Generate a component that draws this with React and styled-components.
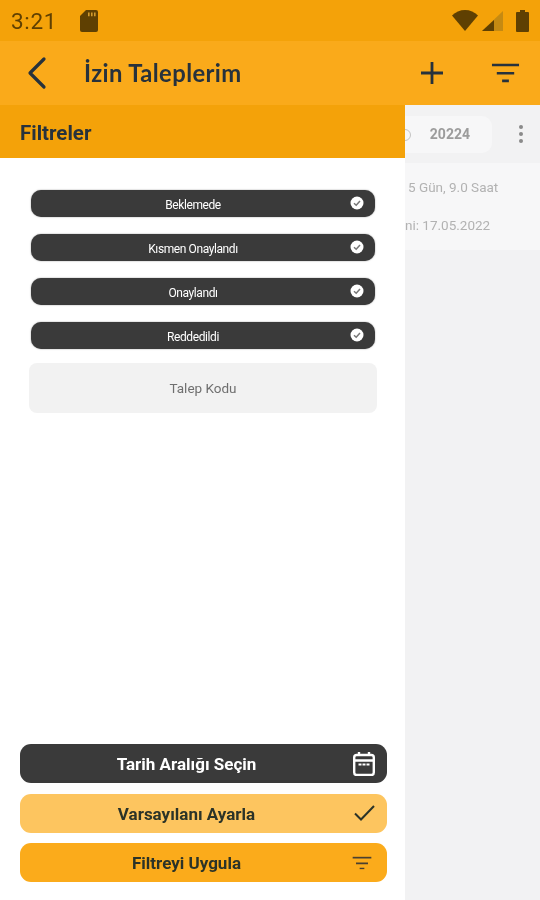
import React from "react";
import styled, { createGlobalStyle } from "styled-components";

const Global = createGlobalStyle`
  html, body { margin: 0; padding: 0; background: #f3f3f3; }
  * { box-sizing: border-box; }
  #root { width: 540px; height: 900px; overflow: hidden; }
`;

const Page = styled.div`
  width: 540px; height: 900px; display: flex; flex-direction: column;
  font-family: Roboto, "Liberation Sans", sans-serif;
  filter: blur(0.45px);
`;
const StatusBar = styled.div`
  height: 41px; flex: none; background: #f4a209; display: flex; align-items: center;
  padding: 0 11px 0 11px; color: #5f4002;
`;
const Clock = styled.span`
  font-size: 22.5px; letter-spacing: 0.7px; width: 69px;
`;
const StatusRight = styled.div`
  margin-left: auto; display: flex; align-items: center; gap: 4px;
`;
const BatterySlot = styled.span`
  display: flex; margin-left: 9px;
`;
const AppBar = styled.div`
  height: 64px; flex: none; background: #faaa1a; display: flex; align-items: center;
  padding: 0 20px 0 24px; color: #263238;
`;
const BackButton = styled.div`
  width: 26px; height: 34px; display: flex; margin-right: 34px;
`;
const Title = styled.h1`
  margin: 0; font: 700 23.8px Lato, sans-serif; color: #27323c; letter-spacing: 0.4px;
`;
const AppActions = styled.div`
  margin-left: auto; display: flex; align-items: center; gap: 47px;
`;
const Body = styled.div`
  position: relative; flex: 1; background: #f2f2f3; overflow: hidden;
  padding-left: 405px; display: flex; flex-direction: column;
`;
const ChipRow = styled.div`
  height: 58px; flex: none; display: flex; align-items: center;
`;
const Chip = styled.div`
  width: 87px; height: 37px; background: #f7f7f8; border-radius: 0 10px 10px 0;
  display: flex; align-items: center; justify-content: flex-end; padding-right: 22px;
  font: 700 14px Roboto, sans-serif; color: #9c9c9c; position: relative;
`;
const ChipGlyph = styled.span`
  position: absolute; left: -6px; top: 13px; width: 12px; height: 12px; border-radius: 50%;
  border: 1.5px solid #c4c4c4;
`;
const Dots = styled.div`
  margin-left: 27px; display: flex; flex-direction: column; gap: 2.6px;
`;
const Dot = styled.span`
  width: 4px; height: 4px; border-radius: 50%; background: #8a8a8a;
`;
const InfoCard = styled.div`
  height: 87px; background: #f7f7f8; display: flex; flex-direction: column; padding-top: 16px; gap: 21px;
`;
const InfoLine = styled.div`
  font: 400 13.5px/17px Roboto, sans-serif; color: #b2b2b2; padding-left: ${p => p.$indent}px;
  white-space: nowrap;
`;
const Drawer = styled.aside`
  position: absolute; left: 0; top: 0; bottom: 0; width: 405px; background: #fff;
  display: flex; flex-direction: column;
`;
const DrawerHeader = styled.div`
  height: 53px; flex: none; background: #f4a209; display: flex; align-items: center;
  padding: 2px 0 0 20px; font: 700 20.5px Roboto, sans-serif; color: #27323c;
`;
const FilterList = styled.div`
  display: flex; flex-direction: column; gap: 17px; padding: 32px 30px 0 31px;
`;
const Pill = styled.div`
  position: relative; height: 27px; background: #3a3a3a; border-radius: 10px;
  display: flex; align-items: center; justify-content: center;
  padding: 2px 20px 0 0;
  color: #fff; font: 400 12px Roboto, sans-serif; letter-spacing: -0.4px;
  box-shadow: 0 0 1.5px rgba(0,0,0,.5);
`;
const PillCheck = styled.span`
  position: absolute; right: 11px; top: 6px; display: flex;
`;
const CodeField = styled.div`
  margin: 14px 28px 0 29px; height: 50px; background: #f2f2f2; border-radius: 8px;
  display: flex; align-items: center; justify-content: center;
  font: 400 13.5px Roboto, sans-serif; color: #6f6f6f;
`;
const Actions = styled.div`
  margin-top: auto; display: flex; flex-direction: column; gap: 10.5px; padding: 0 18px 18px 20px;
`;
const ActionButton = styled.div`
  position: relative; height: 39px; border-radius: 11px; background: ${p => p.$bg};
  color: ${p => p.$fg}; display: flex; align-items: center; justify-content: center;
  font: 700 17px Roboto, sans-serif; padding: 1px 34px 0 0;
`;
const ActionIcon = styled.span`
  position: absolute; right: ${p => p.$right}px; top: 50%; transform: translateY(-50%); display: flex;
`;

const SdCard = () => (
  <svg width="18" height="22" viewBox="0 0 18 22"><path fill="#5f4002" d="M6 0h10a2 2 0 0 1 2 2v18a2 2 0 0 1-2 2H2a2 2 0 0 1-2-2V6z"/><path fill="#d29a2c" d="M8 2.600h1.600v3.600H8zM11 2.600h1.600v3.600H11zM14 2.600h1.600v3.600H14z"/></svg>
);
const Wifi = () => (
  <svg width="26" height="21" viewBox="0 0 26 21"><path fill="#5f4002" d="M0 5.500C3.500 2 8 0 13 0s9.500 2 13 5.500L13 21z"/></svg>
);
const Signal = () => (
  <svg width="21" height="20" viewBox="0 0 21 20"><path fill="#c58a12" d="M21 0v20H0z"/><path fill="#5f4002" d="M12 9v11H0z"/></svg>
);
const Battery = () => (
  <svg width="13" height="22" viewBox="0 0 13 22"><path fill="#5f4002" d="M4 0h5v2h3a1 1 0 0 1 1 1v18a1 1 0 0 1-1 1H1a1 1 0 0 1-1-1V3a1 1 0 0 1 1-1h3z"/></svg>
);
const Back = () => (
  <svg width="26" height="34" viewBox="0 0 26 34" fill="none"><path d="M20 3 6 17l14 14" stroke="#27323c" strokeWidth="3.200" strokeLinecap="round" strokeLinejoin="round"/></svg>
);
const Plus = () => (
  <svg width="24" height="24" viewBox="0 0 24 24" fill="none"><path d="M12 1v22M1 12h22" stroke="#27323c" strokeWidth="2.800"/></svg>
);
const FilterLines = ({ w = 29, color = "#27323c" }) => (
  <svg width={w} height={w * 0.67} viewBox="0 0 30 20" fill="none"><path d="M1 2h28M6 10.500h18M11.500 18.500h7" stroke={color} strokeWidth="2.700"/></svg>
);
const Check = () => (
  <svg width="14" height="14" viewBox="0 0 14 14"><circle cx="7" cy="7" r="6.500" fill="#fff"/><path d="M4 7.300 6.200 9.300 10 5" fill="none" stroke="#777" strokeWidth="1.500"/></svg>
);
const Calendar = () => (
  <svg width="22" height="24" viewBox="0 0 22 24" fill="none" stroke="#fff" strokeWidth="2.400"><rect x="1.200" y="3" width="19.600" height="20" rx="2.500"/><path d="M1 8.500h20M6 0v4M16 0v4"/><path d="M5.500 12.500h3M9.500 12.500h3M13.500 12.500h3" strokeWidth="1.800"/></svg>
);
const Tick = () => (
  <svg width="21" height="16" viewBox="0 0 21 16" fill="none"><path d="M1 8.500 7 14.500 20 1" stroke="#2b3328" strokeWidth="2"/></svg>
);

const filters = ["Beklemede", "Kısmen Onaylandı", "Onaylandı", "Reddedildi"];

export default function App() {
  return (
    <Page>
      <Global />
      <StatusBar>
        <Clock>3:21</Clock>
        <SdCard />
        <StatusRight><Wifi /><Signal /><BatterySlot><Battery /></BatterySlot></StatusRight>
      </StatusBar>
      <AppBar>
        <BackButton><Back /></BackButton>
        <Title>İzin Taleplerim</Title>
        <AppActions><Plus /><FilterLines /></AppActions>
      </AppBar>
      <Body>
        <ChipRow>
          <Chip><ChipGlyph />20224</Chip>
          <Dots><Dot /><Dot /><Dot /></Dots>
        </ChipRow>
        <InfoCard>
          <InfoLine $indent={3}>5 Gün, 9.0 Saat</InfoLine>
          <InfoLine $indent={0}>ni: 17.05.2022</InfoLine>
        </InfoCard>
        <Drawer>
          <DrawerHeader>Filtreler</DrawerHeader>
          <FilterList>
            {filters.map(f => (
              <Pill key={f}>{f}<PillCheck><Check /></PillCheck></Pill>
            ))}
          </FilterList>
          <CodeField>Talep Kodu</CodeField>
          <Actions>
            <ActionButton $bg="#3a3a3a" $fg="#fff">Tarih Aralığı Seçin<ActionIcon $right={12}><Calendar /></ActionIcon></ActionButton>
            <ActionButton $bg="#fdc55f" $fg="#2b3328">Varsayılanı Ayarla<ActionIcon $right={12}><Tick /></ActionIcon></ActionButton>
            <ActionButton $bg="#fbab1b" $fg="#2b3328">Filtreyi Uygula<ActionIcon $right={15}><FilterLines w={20} color="#4a4030" /></ActionIcon></ActionButton>
          </Actions>
        </Drawer>
      </Body>
    </Page>
  );
}
